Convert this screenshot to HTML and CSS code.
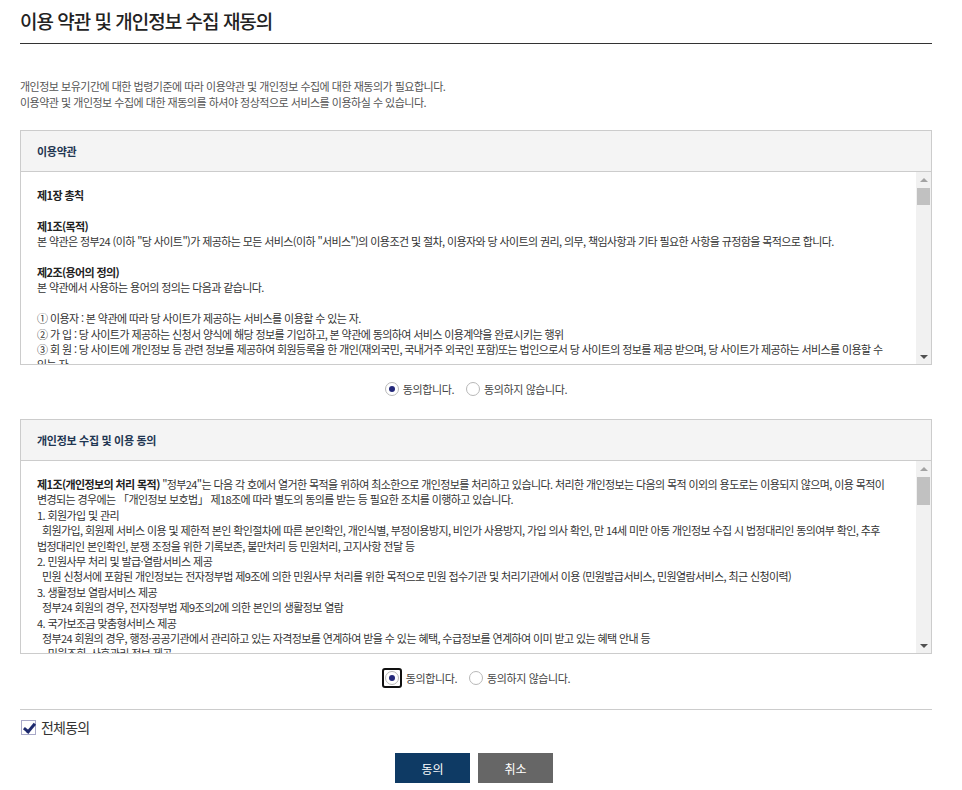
FILE: index.html
```html
<!DOCTYPE html>
<html lang="ko">
<head>
	<title>이용 약관 및 개인정보 수집 재동의</title>
	<meta charset="utf-8">
	<meta name="viewport" content="width=device-width, initial-scale=1">
	<link rel="stylesheet" href="styles.css">
</head>
<body>
	<div class="page">
		<h1 class="page-title">이용 약관 및 개인정보 수집 재동의</h1>

		<p class="intro">
			개인정보 보유기간에 대한 법령기준에 따라 이용약관 및 개인정보 수집에 대한 재동의가 필요합니다.<br>
			이용약관 및 개인정보 수집에 대한 재동의를 하셔야 정상적으로 서비스를 이용하실 수 있습니다.
		</p>

		<div class="agree-box">
			<div class="agree-head">이용약관</div>
			<div class="agree-body">
				<div class="agree-text">
					<strong>제1장 총칙</strong><br>
					<br>
					<strong>제1조(목적)</strong><br>
					본 약관은 정부24 (이하 "당 사이트")가 제공하는 모든 서비스(이하 "서비스")의 이용조건 및 절차, 이용자와 당 사이트의 권리, 의무, 책임사항과 기타 필요한 사항을 규정함을 목적으로 합니다.<br>
					<br>
					<strong>제2조(용어의 정의)</strong><br>
					본 약관에서 사용하는 용어의 정의는 다음과 같습니다.<br>
					<br>
					① 이용자 : 본 약관에 따라 당 사이트가 제공하는 서비스를 이용할 수 있는 자.<br>
					② 가 입 : 당 사이트가 제공하는 신청서 양식에 해당 정보를 기입하고, 본 약관에 동의하여 서비스 이용계약을 완료시키는 행위<br>
					③ 회 원 : 당 사이트에 개인정보 등 관련 정보를 제공하여 회원등록을 한 개인(재외국민, 국내거주 외국인 포함)또는 법인으로서 당 사이트의 정보를 제공 받으며, 당 사이트가 제공하는 서비스를 이용할 수 있는 자.<br>
					④ 아이디(ID) : 회원의 식별과 서비스 이용을 위하여 회원이 선정하고 당 사이트가 승인하는 문자와 숫자의 조합<br>
					⑤ 비밀번호 : 회원의 정보 보호를 위해 회원 자신이 설정한 문자와 숫자의 조합<br>
					⑥ 탈 퇴 : 회원이 이용계약을 종료시키는 행위
				</div>
				<div class="scrollbar">
					<span class="sb-btn sb-up"></span>
					<span class="sb-track"><span class="sb-thumb" style="height: 17px;"></span></span>
					<span class="sb-btn sb-down"></span>
				</div>
			</div>
		</div>

		<div class="choice-row">
			<label class="choice"><input type="radio" name="terms" checked> 동의합니다.</label>
			<label class="choice"><input type="radio" name="terms"> 동의하지 않습니다.</label>
		</div>

		<div class="agree-box">
			<div class="agree-head">개인정보 수집 및 이용 동의</div>
			<div class="agree-body">
				<div class="agree-text">
					<strong>제1조(개인정보의 처리 목적)</strong> "정부24"는 다음 각 호에서 열거한 목적을 위하여 최소한으로 개인정보를 처리하고 있습니다. 처리한 개인정보는 다음의 목적 이외의 용도로는 이용되지 않으며, 이용 목적이 변경되는 경우에는 「개인정보 보호법」 제18조에 따라 별도의 동의를 받는 등 필요한 조치를 이행하고 있습니다.<br>
					1. 회원가입 및 관리<br>
					&nbsp;&nbsp;회원가입, 회원제 서비스 이용 및 제한적 본인 확인절차에 따른 본인확인, 개인식별, 부정이용방지, 비인가 사용방지, 가입 의사 확인, 만 14세 미만 아동 개인정보 수집 시 법정대리인 동의여부 확인, 추후 법정대리인 본인확인, 분쟁 조정을 위한 기록보존, 불만처리 등 민원처리, 고지사항 전달 등<br>
					2. 민원사무 처리 및 발급·열람서비스 제공<br>
					&nbsp;&nbsp;민원 신청서에 포함된 개인정보는 전자정부법 제9조에 의한 민원사무 처리를 위한 목적으로 민원 접수기관 및 처리기관에서 이용 (민원발급서비스, 민원열람서비스, 최근 신청이력)<br>
					3. 생활정보 열람서비스 제공<br>
					&nbsp;&nbsp;정부24 회원의 경우, 전자정부법 제9조의2에 의한 본인의 생활정보 열람<br>
					4. 국가보조금 맞춤형서비스 제공<br>
					&nbsp;&nbsp;정부24 회원의 경우, 행정·공공기관에서 관리하고 있는 자격정보를 연계하여 받을 수 있는 혜택, 수급정보를 연계하여 이미 받고 있는 혜택 안내 등<br>
					&nbsp;&nbsp;- 민원조회, 사후관리 정보 제공<br>
					5. 행정정보 공동이용 서비스 제공<br>
					&nbsp;&nbsp;민원 처리 시 구비서류 제출을 대신하여 행정기관 간 정보를 공동이용
				</div>
				<div class="scrollbar">
					<span class="sb-btn sb-up"></span>
					<span class="sb-track"><span class="sb-thumb" style="height: 28px;"></span></span>
					<span class="sb-btn sb-down"></span>
				</div>
			</div>
		</div>

		<div class="choice-row">
			<label class="choice"><span class="focus-ring"><input type="radio" name="privacy" checked></span>동의합니다.</label>
			<label class="choice"><input type="radio" name="privacy"> 동의하지 않습니다.</label>
		</div>

		<div class="all-agree">
			<label class="check"><input type="checkbox" checked> 전체동의</label>
		</div>

		<div class="btn-row">
			<button class="btn btn-ok">동의</button>
			<button class="btn btn-cancel">취소</button>
		</div>
	</div>
</body>
</html>
```

FILE: styles.css
```css
body {
	margin: 0;
	padding: 0;
	background-color: #ffffff;
	color: #333333;
	font-family: "Noto Sans CJK KR", "Noto Sans", sans-serif;
}

.page {
	width: 912px;
	margin-left: 20px;
}

.page-title {
	margin: 0;
	padding-top: 8px;
	height: 35px;
	border-bottom: 1px solid #333333;
	font-size: 19px;
	font-weight: 500;
	line-height: 26px;
	letter-spacing: -1px;
	color: #222222;
}

.intro {
	margin: 34px 0 20px 0;
	font-size: 11px;
	line-height: 16px;
	letter-spacing: -0.5px;
	color: #555555;
}

.agree-box {
	border: 1px solid #cccccc;
}

.agree-head {
	height: 40px;
	padding-left: 16px;
	background-color: #f4f4f4;
	border-bottom: 1px solid #cccccc;
	font-size: 11px;
	font-weight: bold;
	line-height: 40px;
	letter-spacing: -0.3px;
	color: #1f3652;
}

.agree-body {
	display: flex;
	height: 192px;
}

.agree-text {
	flex: 1;
	padding: 16px 16px 0 16px;
	overflow: hidden;
	font-size: 11px;
	line-height: 15.4px;
	letter-spacing: -0.6px;
	word-break: keep-all;
	color: #333333;
}

.agree-text strong {
	color: #222222;
}

/* scrollbar drawn by hand, the browser hides the native one */
.scrollbar {
	display: flex;
	flex-direction: column;
	width: 15px;
	background-color: #f1f1f1;
}

.sb-btn {
	display: flex;
	align-items: center;
	justify-content: center;
	height: 15px;
}

.sb-up::after {
	content: "";
	border-left: 4px solid transparent;
	border-right: 4px solid transparent;
	border-bottom: 4px solid #a3a3a3;
}

.sb-down::after {
	content: "";
	border-left: 4px solid transparent;
	border-right: 4px solid transparent;
	border-top: 4px solid #505050;
}

.sb-track {
	flex: 1;
	padding: 1px 1px 0 1px;
}

.sb-thumb {
	display: block;
	background-color: #c1c1c1;
}

.choice-row {
	display: flex;
	justify-content: center;
	align-items: center;
	gap: 12px;
	height: 20px;
	margin: 14px 0 20px 0;
	font-size: 11px;
	letter-spacing: -0.4px;
	color: #444444;
}

.choice {
	display: flex;
	align-items: center;
	gap: 4px;
	cursor: pointer;
}

.choice input[type="radio"] {
	appearance: none;
	width: 14px;
	height: 14px;
	margin: 0;
	border: 1px solid #b8b8b8;
	border-radius: 50%;
	background-color: #ffffff;
	display: flex;
	align-items: center;
	justify-content: center;
}

.choice input[type="radio"]:checked::after {
	content: "";
	width: 6px;
	height: 6px;
	border-radius: 50%;
	background-color: #24287a;
}

.focus-ring {
	display: flex;
	padding: 1px;
	border: 2px solid #111111;
	border-radius: 3px;
}

.all-agree {
	margin-top: 21px;
	border-top: 1px solid #cccccc;
	padding: 7px 0 0 1px;
}

.check {
	display: flex;
	align-items: center;
	gap: 5px;
	font-size: 14px;
	letter-spacing: -0.8px;
	color: #333333;
	cursor: pointer;
}

.check input[type="checkbox"] {
	appearance: none;
	position: relative;
	width: 15px;
	height: 15px;
	margin: 0;
	border: 1px solid #a8a8c8;
	background-color: #ffffff;
}

.check input[type="checkbox"]:checked::after {
	content: "";
	position: absolute;
	left: 4px;
	top: 0px;
	width: 4px;
	height: 9px;
	border-right: 3px solid #1e2a6e;
	border-bottom: 3px solid #1e2a6e;
	transform: rotate(40deg);
}

.btn-row {
	display: flex;
	justify-content: center;
	gap: 8px;
	margin-top: 16px;
	padding-right: 4px;
}

.btn {
	width: 75px;
	height: 30px;
	border: none;
	font-family: "Noto Sans CJK KR", "Noto Sans", sans-serif;
	font-size: 12px;
	color: #ffffff;
	cursor: pointer;
}

.btn-ok {
	background-color: #0e3a64;
}

.btn-cancel {
	background-color: #666666;
}
```
